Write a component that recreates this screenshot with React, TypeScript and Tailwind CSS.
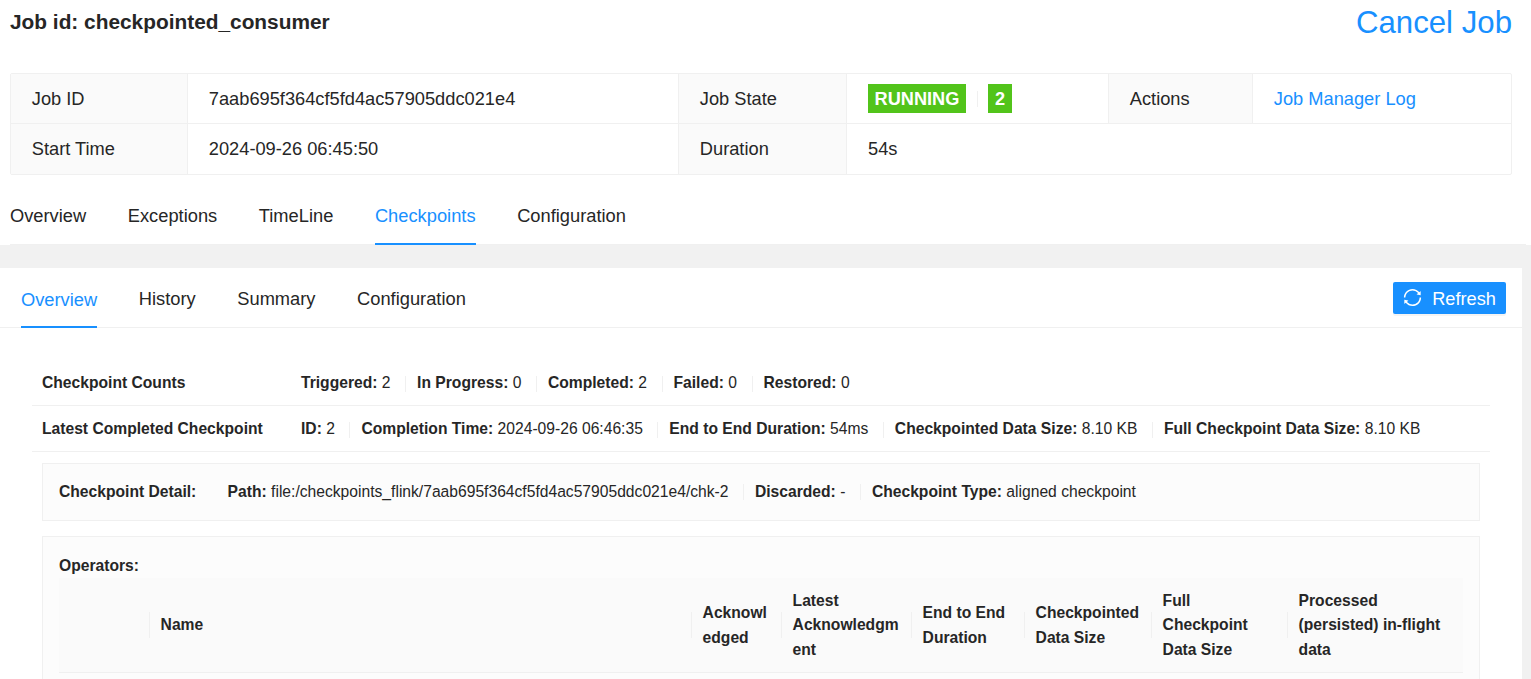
import type { ReactNode } from 'react';
import { AiOutlineSync } from 'react-icons/ai';

function Stat({ label, value, first }: { label: string; value: string; first?: boolean }) {
  return (
    <>
      {!first && <span className="ml-[14.5px] mr-[11px] h-4 w-px bg-[#f0f0f0]" />}
      <span className="whitespace-pre">
        <b className="font-bold">{label}:</b> {value}
      </span>
    </>
  );
}

function HeadCell({ children, last }: { children?: ReactNode; last?: boolean }) {
  return (
    <div className="flex h-full items-center">
      <div className="min-w-0 flex-1 break-words pl-[10.6px] pr-[10px] pt-[2px]">{children}</div>
      {!last && <span className="h-[26px] w-px shrink-0 bg-[#f0f0f0]" />}
    </div>
  );
}

export default function App() {
  return (
    <div className="flex h-[679px] w-[1531px] flex-col overflow-hidden bg-white font-['Liberation_Sans',sans-serif] text-[#262626]">
      <div className="flex items-start justify-between pl-[10px] pr-[19px]">
        <h1 className="mt-[10px] text-[20.85px] font-bold leading-6">Job id: checkpointed_consumer</h1>
        <span className="mt-[5px] text-[31.2px] leading-9 text-[#1890ff]">Cancel Job</span>
      </div>

      <div className="ml-[10px] mr-[19px] mt-[32px] grid h-[102px] shrink-0 grid-cols-[177px_491px_168px_262px_144px_1fr] grid-rows-[49px_1fr] rounded-[2px] border border-[#f0f0f0] text-[18.25px]">
        <div className="flex items-center border-r border-[#f0f0f0] bg-[#fafafa] pl-[20.8px]">Job ID</div>
        <div className="flex items-center border-r border-[#f0f0f0] pl-[20.8px]">7aab695f364cf5fd4ac57905ddc021e4</div>
        <div className="flex items-center border-r border-[#f0f0f0] bg-[#fafafa] pl-[20.8px]">Job State</div>
        <div className="flex items-center border-r border-[#f0f0f0] pl-[21px]">
          <span className="flex h-[29px] items-center bg-[#52c41a] px-[6.5px] pt-[2px] text-[18.2px] font-bold text-white">RUNNING</span>
          <span className="ml-[11px] h-[16px] border-l border-[#f0f0f0]" />
          <span className="ml-[10px] flex h-[29px] items-center bg-[#52c41a] px-[7px] pt-[2px] text-[18.2px] font-bold text-white">2</span>
        </div>
        <div className="flex items-center border-r border-[#f0f0f0] bg-[#fafafa] pl-[20.8px]">Actions</div>
        <div className="flex items-center pl-[20.8px] text-[#1890ff]">Job Manager Log</div>
        <div className="flex items-center border-r border-t border-[#f0f0f0] bg-[#fafafa] pl-[20.8px]">Start Time</div>
        <div className="flex items-center border-r border-t border-[#f0f0f0] pl-[20.8px]">2024-09-26 06:45:50</div>
        <div className="flex items-center border-r border-t border-[#f0f0f0] bg-[#fafafa] pl-[20.8px]">Duration</div>
        <div className="col-span-3 flex items-center border-t border-[#f0f0f0] pl-[21px]">54s</div>
      </div>

      <nav className="ml-[10px] mr-[5px] flex h-[70px] shrink-0 gap-[41.6px] border-b border-[#f0f0f0] text-[18.3px]">
        <span className="flex items-center pt-[13px]">Overview</span>
        <span className="flex items-center pt-[13px]">Exceptions</span>
        <span className="flex items-center pt-[13px]">TimeLine</span>
        <span className="-mb-px flex items-center border-b-[2px] border-[#1890ff] pt-[14px] text-[#1890ff]">Checkpoints</span>
        <span className="flex items-center pt-[13px]">Configuration</span>
      </nav>

      <div className="flex-1 bg-[#f1f1f1] pt-[23px]">
        <div className="mr-[9px] h-full bg-white">
          <div className="flex h-[60px] items-center justify-between border-b border-[#f0f0f0] pl-[21px] pr-[16px]">
            <div className="flex h-full gap-[41.6px] text-[18.3px]">
              <span className="-mb-px flex items-center border-b-[2px] border-[#1890ff] pt-[5px] text-[#1890ff]">Overview</span>
              <span className="flex items-center pt-[3px]">History</span>
              <span className="flex items-center pt-[3px]">Summary</span>
              <span className="flex items-center pt-[3px]">Configuration</span>
            </div>
            <button className="flex h-[32px] w-[113px] items-center justify-center gap-[9px] rounded-[2px] bg-[#1890ff] pr-[1px] text-[18.2px] text-white shadow-[0_2px_0_rgba(0,0,0,0.045)]">
              <AiOutlineSync size={21} />
              <span className="pt-[4px]">Refresh</span>
            </button>
          </div>

          <div className="px-[32px] pt-[32px] text-[15.65px] leading-[24.5px]">
            <div className="flex h-[46px] items-center border-b border-[#f0f0f0] pl-[10px] pt-[2px]">
              <b className="w-[259px]">Checkpoint Counts</b>
              <Stat first label="Triggered" value="2" />
              <Stat label="In Progress" value="0" />
              <Stat label="Completed" value="2" />
              <Stat label="Failed" value="0" />
              <Stat label="Restored" value="0" />
            </div>
            <div className="flex h-[46px] items-center border-b border-[#f0f0f0] pl-[10px] pt-[2px]">
              <b className="w-[259px]">Latest Completed Checkpoint</b>
              <Stat first label="ID" value="2" />
              <Stat label="Completion Time" value="2024-09-26 06:46:35" />
              <Stat label="End to End Duration" value="54ms" />
              <Stat label="Checkpointed Data Size" value="8.10 KB" />
              <Stat label="Full Checkpoint Data Size" value="8.10 KB" />
            </div>
            <div className="ml-[10px] mr-[10px] mt-[11px] flex h-[58px] items-center border border-[#f0f0f0] bg-[#fcfcfc] pl-[16px]">
              <b className="w-[168.6px]">Checkpoint Detail:</b>
              <Stat first label="Path" value="file:/checkpoints_flink/7aab695f364cf5fd4ac57905ddc021e4/chk-2" />
              <Stat label="Discarded" value="-" />
              <Stat label="Checkpoint Type" value="aligned checkpoint" />
            </div>
            <div className="ml-[10px] mr-[10px] mt-[15px] border border-[#f0f0f0] bg-[#fcfcfc] px-[16px] pb-[40px] pt-[17px]">
              <b className="-mb-px block">Operators:</b>
              <div className="grid h-[95px] grid-cols-[91px_542px_90px_130px_113px_127px_136px_1fr] items-center border-b border-[#f0f0f0] bg-[#fafafa] font-bold">
                <HeadCell />
                <HeadCell>Name</HeadCell>
                <HeadCell>Acknowledged</HeadCell>
                <HeadCell>Latest Acknowledgment</HeadCell>
                <HeadCell>End to End Duration</HeadCell>
                <HeadCell>Checkpointed Data Size</HeadCell>
                <HeadCell>Full Checkpoint Data Size</HeadCell>
                <HeadCell last>Processed (persisted) in-flight data</HeadCell>
              </div>
            </div>
          </div>
        </div>
      </div>
    </div>
  );
}
